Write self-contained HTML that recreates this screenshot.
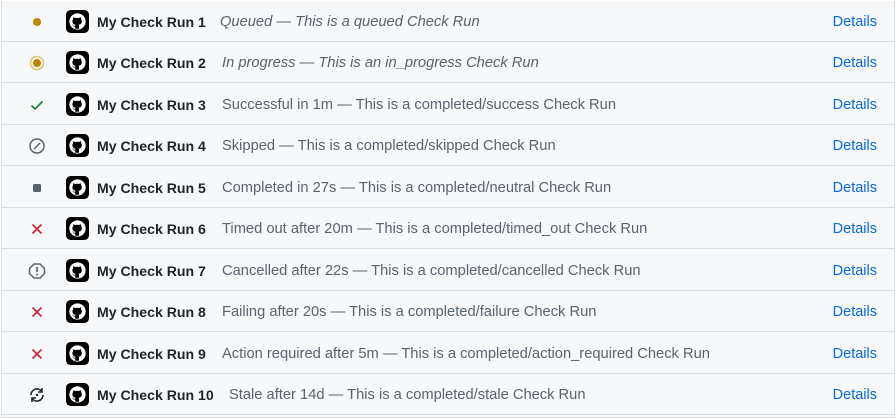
<!DOCTYPE html><html><head><style>
body{margin:0;width:896px;height:419px;background:#fff;overflow:hidden;font-family:"Liberation Sans",sans-serif}
.box{position:absolute;left:1px;top:1px;width:892px;height:416px;border:1px solid #d8dee4;border-top:none;background:#f6f8fa}
.row{position:absolute;left:0;width:892px;height:41px;border-bottom:1.5px solid #d8dee4;box-sizing:border-box}
.ic{position:absolute;left:26px;top:12px;width:18px;height:18px}
.av{position:absolute;left:64px;top:9px;width:23px;height:23px}
.nm{position:absolute;left:95px;top:13px;font-size:14.1px;font-weight:bold;color:#1f2328}
.ds{position:absolute;top:13px;font-size:14.7px;color:#59636e}
.dt{position:absolute;right:17px;top:13px;font-size:14.5px;color:#0969da}
i{font-style:italic}
</style></head><body><div class="box">
<svg width="0" height="0" style="position:absolute"><defs><g id="gh"><rect x="0" y="0" width="24" height="24" rx="5" fill="#000"/><circle cx="12" cy="12" r="8.5" fill="#fff"/><path d="M9.6 19.6v-2.4c-2 .3-2.4-1-2.4-1-.4-.9-.8-1-.8-1 .7-.2 1.2.7 1.2.7.6 1 1.6.7 2 .5.1-.5.3-.8.5-1-1.8-.3-3.4-1-3.4-3.7 0-.8.3-1.5.8-2-.1-.3-.3-1 .1-2 0 0 .7-.2 2.1.7a7 7 0 0 1 3.8 0c1.4-.9 2.1-.7 2.1-.7.4 1 .2 1.7.1 2 .5.5.8 1.2.8 2 0 2.7-1.6 3.4-3.4 3.7.3.2.5.7.5 1.4v2.8z" fill="#000"/></g></defs></svg>
</div>
<script>
const rows=[
['My Check Run 1','<i>Queued — This is a queued Check Run</i>',219,'q'],
['My Check Run 2','<i>In progress — This is an in_progress Check Run</i>',221,'p'],
['My Check Run 3','Successful in 1m — This is a completed/success Check Run',221,'s'],
['My Check Run 4','Skipped — This is a completed/skipped Check Run',221,'k'],
['My Check Run 5','Completed in 27s — This is a completed/neutral Check Run',221,'n'],
['My Check Run 6','Timed out after 20m — This is a completed/timed_out Check Run',221,'x'],
['My Check Run 7','Cancelled after 22s — This is a completed/cancelled Check Run',221,'c'],
['My Check Run 8','Failing after 20s — This is a completed/failure Check Run',221,'x'],
['My Check Run 9','Action required after 5m — This is a completed/action_required Check Run',221,'x'],
['My Check Run 10','Stale after 14d — This is a completed/stale Check Run',228,'t']];
const icons={
q:'<circle cx="9" cy="9" r="4" fill="#bf8700"/>',
p:'<circle cx="9" cy="9" r="6.5" fill="none" stroke="#e6c36a" stroke-width="1.5"/><circle cx="9" cy="9" r="4" fill="#bf8700"/>',
s:'<path d="M3.5 9.5l3.5 3.5 7.5-7.5" fill="none" stroke="#1a7f37" stroke-width="1.6"/>',
k:'<circle cx="9" cy="9" r="7" fill="none" stroke="#59636e" stroke-width="1.5"/><path d="M6 12l6-6" stroke="#59636e" stroke-width="1.5"/>',
n:'<rect x="5" y="5" width="8" height="8" rx="1.5" fill="#59636e"/>',
x:'<path d="M4.5 4.5l9 9M13.5 4.5l-9 9" stroke="#cf222e" stroke-width="1.6"/>',
c:'<path d="M6 2h6l4.5 4.5v5L12 16H6l-4.5-4.5v-5z" fill="none" stroke="#59636e" stroke-width="1.5"/><path d="M9 5v5" stroke="#59636e" stroke-width="1.7"/><circle cx="9" cy="12.5" r="1" fill="#59636e"/>',
t:'<path d="M3 9a6 6 0 0 1 10.5-4M15 9a6 6 0 0 1-10.5 4" fill="none" stroke="#1f2328" stroke-width="1.6"/><path d="M14 2v4h-4M4 16v-4h4" fill="none" stroke="#1f2328" stroke-width="1.6"/><circle cx="9" cy="9" r="1.2" fill="#1f2328"/>'};
let h='';rows.forEach((r,i)=>{h+=`<div class="row" style="top:${(i*41.44).toFixed(1)}px"><svg class="ic" viewBox="0 0 18 18">${icons[r[3]]}</svg><svg class="av" viewBox="0 0 24 24"><use href="#gh"/></svg><span class="nm">${r[0]}</span><span class="ds" style="left:${r[2]-1}px">${r[1]}</span><span class="dt">Details</span></div>`});
document.querySelector('.box').insertAdjacentHTML('beforeend',h);
</script></body></html>
